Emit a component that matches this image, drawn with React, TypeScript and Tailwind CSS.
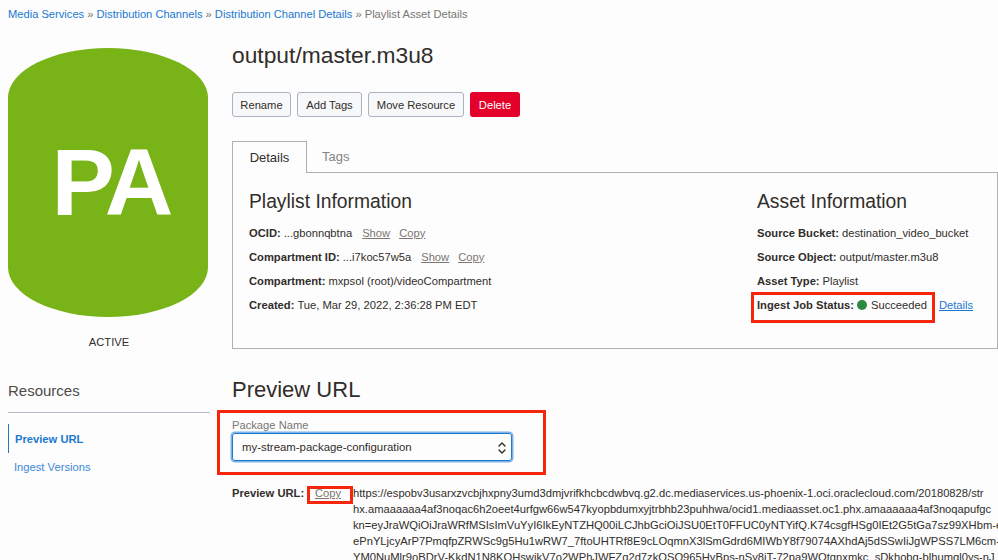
const sans = "font-['Liberation_Sans',Arial,sans-serif]";

function Field({ label, children, className }: { label: string; children: React.ReactNode; className?: string }) {
  return (
    <div className={`h-[24px] flex items-center text-[11.2px] text-[#312d2a] whitespace-nowrap ${className ?? ""}`}>
      <b className="mr-[3px] font-bold">{label}</b>
      {children}
    </div>
  );
}

function Action({ children, className }: { children: React.ReactNode; className?: string }) {
  return <span className={`text-[#7a7672] underline ${className ?? ""}`}>{children}</span>;
}

function Btn({ children, className }: { children: React.ReactNode; className?: string }) {
  return (
    <button className={`h-[25px] pt-px rounded-[3px] border border-[#aab2bd] bg-[#f7f8f9] text-[11.2px] text-[#312d2a] ${className ?? ""}`}>
      {children}
    </button>
  );
}

const urlLines = [
  "https://espobv3usarxzvcbjhxpny3umd3dmjvrifkhcbcdwbvq.g2.dc.mediaservices.us-phoenix-1.oci.oraclecloud.com/20180828/str",
  "hx.amaaaaaa4af3noqac6h2oeet4urfgw66w547kyopbdumxyjtrbhb23puhhwa/ocid1.mediaasset.oc1.phx.amaaaaaa4af3noqapufgc",
  "kn=eyJraWQiOiJraWRfMSIsImVuYyI6IkEyNTZHQ00iLCJhbGciOiJSU0EtT0FFUC0yNTYifQ.K74csgfHSg0IEt2G5tGa7sz99XHbm-e",
  "ePnYLjcyArP7PmqfpZRWSc9g5Hu1wRW7_7ftoUHTRf8E9cLOqmnX3lSmGdrd6MIWbY8f79074AXhdAj5dSSwIiJgWPSS7LM6cm-",
  "YM0NuMlr9oBDrV-KkdN1N8KQHswikV7o2WPhJWFZg2d7zkQSQ965HyBps-nSy8jT-72pa9WOtgnxmkc_sDkhobg-blhumql0ys-nJ",
];

export default function App() {
  return (
    <div className={`relative h-[560px] w-[998px] overflow-hidden bg-[#fdfdfd] ${sans}`}>
      <div className="h-[48px] pl-[8px] pt-[8px] text-[11.15px] leading-[13px] text-[#7a7672]">
        <span className="text-[#1b79d0]">Media Services</span> » <span className="text-[#1b79d0]">Distribution Channels</span> »{" "}
        <span className="text-[#1b79d0]">Distribution Channel Details</span> » Playlist Asset Details
      </div>

      <div className="flex">
        <aside className="w-[232px] shrink-0 pl-[8px]">
          <div className="w-[200px] h-[269px] rounded-[50%/18.5%] bg-[#78b317] flex items-center justify-center pl-[6px] text-[95px] font-bold leading-none tracking-[-3px] text-white">
            PA
          </div>
          <div className="mt-[17px] w-[202px] text-center text-[11.2px] leading-[16px] text-[#312d2a]">ACTIVE</div>
          <div className="mt-[31px] w-[202px] border-b border-[#b3bcc7] pb-[11px] text-[15px] leading-[20px] text-[#4f4b47]">Resources</div>
          <div className="mt-[11px] h-[29px] pt-px border-l border-[#1b79d0] pl-[6px] flex items-center text-[11.2px] font-bold text-[#1b79d0]">Preview URL</div>
          <div className="mt-[2px] h-[24px] pl-[6px] flex items-center text-[11.2px] text-[#3b8ad8]">Ingest Versions</div>
        </aside>

        <main className="flex-1 min-w-0">
          <h1 className="mt-[-5px] text-[22.8px] leading-[24px] text-[#312d2a]">output/master.m3u8</h1>
          <div className="mt-[25px] flex gap-[6px]">
            <Btn className="w-[59px]">Rename</Btn>
            <Btn className="w-[65px]">Add Tags</Btn>
            <Btn className="w-[96px]">Move Resource</Btn>
            <button className="h-[25px] w-[50px] pt-px rounded-[3px] bg-[#e4002b] text-[11.2px] text-white">Delete</button>
          </div>

          <div className="mt-[24px] flex h-[32px] text-[13px]">
            <div className="relative z-10 h-[32px] w-[75px] border border-b-0 border-[#b0b0b0] bg-[#fdfdfd] flex items-center justify-center text-[#312d2a]">Details</div>
            <div className="h-[31px] pl-[15px] flex items-center text-[#858585]">Tags</div>
          </div>
          <div className="-mt-px h-[177px] border border-[#b0b0b0] pl-[16px] pt-[17px] flex">
            <section className="w-[508px] shrink-0">
              <h2 className="text-[19.3px] leading-[24px] mb-[7px] text-[#312d2a]">Playlist Information</h2>
              <Field label="OCID:">...gbonnqbtna<Action className="ml-[10px]">Show</Action><Action className="ml-[9px]">Copy</Action></Field>
              <Field label="Compartment ID:">...i7koc57w5a<Action className="ml-[10px]">Show</Action><Action className="ml-[9px]">Copy</Action></Field>
              <Field label="Compartment:">mxpsol (root)/videoCompartment</Field>
              <Field label="Created:">Tue, Mar 29, 2022, 2:36:28 PM EDT</Field>
            </section>
            <section>
              <h2 className="text-[19.3px] leading-[24px] mb-[7px] text-[#312d2a]">Asset Information</h2>
              <Field label="Source Bucket:">destination_video_bucket</Field>
              <Field label="Source Object:">output/master.m3u8</Field>
              <Field label="Asset Type:">Playlist</Field>
              <Field label="Ingest Job Status:">
                <span className="mr-[4px] h-[10px] w-[10px] rounded-full bg-[#2b8a3e]" />
                Succeeded
                <span className="ml-[12px] text-[#1b79d0] underline">Details</span>
              </Field>
            </section>
          </div>

          <h2 className="mt-[27px] text-[22px] leading-[28px] text-[#312d2a]">Preview URL</h2>
          <div className="mt-[15px] text-[11.2px] leading-[13px] text-[#7a7672]">Package Name</div>
          <div className="mt-[1px] h-[28px] w-[280px] pt-px rounded-[3px] border border-[#1b79d0] ring-[1.5px] ring-[#7fb2e6] flex items-center justify-between pl-[9px] pr-[4px] text-[11.4px] text-[#312d2a]">
            my-stream-package-configuration
            <svg width="10" height="16" viewBox="0 0 10 16" fill="none" stroke="#312d2a" strokeWidth="1.4" strokeLinecap="round" strokeLinejoin="round">
              <path d="M2 6l3-3 3 3" />
              <path d="M2 10l3 3 3-3" />
            </svg>
          </div>

          <div className="mt-[24px] flex text-[11.2px] leading-[16px] text-[#312d2a]">
            <b className="w-[83px] shrink-0 whitespace-nowrap font-bold">Preview URL:</b>
            <Action className="w-[38px] shrink-0">Copy</Action>
            <div className="whitespace-nowrap">
              {urlLines.map((l) => (
                <div key={l}>{l}</div>
              ))}
            </div>
          </div>
        </main>
      </div>

      {/* red callouts drawn over the screenshot */}
      <div className="absolute left-[751px] top-[292px] h-[31px] w-[184px] border-[3px] border-[#f5260c]" />
      <div className="absolute left-[217px] top-[410px] h-[65px] w-[329px] border-[3px] border-[#f5260c]" />
      <div className="absolute left-[307px] top-[486px] h-[18px] w-[46px] border-[3px] border-[#f5260c]" />
    </div>
  );
}
